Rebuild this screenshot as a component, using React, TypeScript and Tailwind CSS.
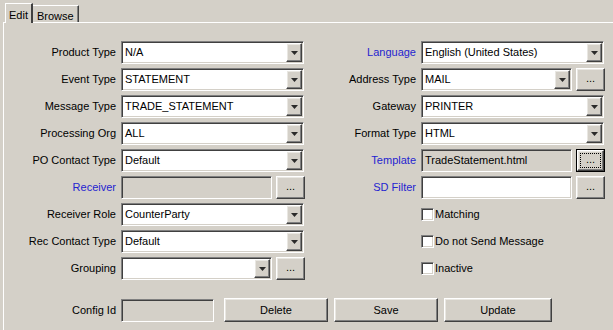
import React from 'react';

const raised =
  'border border-t-white border-l-white border-r-[#404040] border-b-[#404040] shadow-[inset_-1px_-1px_0_#808080,inset_1px_1px_0_#e9e7e2]';
const sunken =
  'border border-t-[#808080] border-l-[#808080] border-r-white border-b-white shadow-[inset_1px_1px_0_#404040,inset_-1px_-1px_0_#d4d0c8]';

function Arrow() {
  return (
    <div className={`${raised} w-[16px] h-full flex items-center justify-center bg-[#d4d0c8]`}>
      <svg width="7" height="4" viewBox="0 0 7 4">
        <polygon points="0,0 7,0 3.5,4" fill="#2a2a2a" />
      </svg>
    </div>
  );
}

function Combo({ value, w = 'w-[183px]' }: { value: string; w?: string }) {
  return (
    <div className={`${sunken} ${w} h-[23px] bg-white flex p-[1px]`}>
      <span className="flex-1 pl-[2px] leading-[19px] truncate">{value}</span>
      <Arrow />
    </div>
  );
}

function Field({ value = '', w, bg = 'bg-[#d4d0c8]' }: { value?: string; w: string; bg?: string }) {
  return (
    <div className={`${sunken} ${w} h-[23px] ${bg} flex items-center pl-[3px]`}>
      <span>{value}</span>
    </div>
  );
}

function Dots({ focused = false }: { focused?: boolean }) {
  if (focused) {
    return (
      <div className="w-[29px] h-[23px] border border-black">
        <div className={`${raised} w-full h-full flex items-center justify-center p-[2px]`}>
          <div className="w-full h-full border border-dotted border-black flex items-center justify-center leading-none pb-[2px]">
            ...
          </div>
        </div>
      </div>
    );
  }
  return (
    <div className={`${raised} w-[29px] h-[23px] flex items-center justify-center leading-none pb-[2px]`}>
      ...
    </div>
  );
}

function Row({
  label,
  blue = false,
  labelW,
  children,
}: {
  label: string;
  blue?: boolean;
  labelW: string;
  children: React.ReactNode;
}) {
  return (
    <div className="flex items-center h-[23px]">
      <div className={`${labelW} text-right ${blue ? 'text-[#2424d0]' : 'text-black'}`}>{label}</div>
      <div className="flex items-center gap-[4px] ml-[5px]">{children}</div>
    </div>
  );
}

function Check({ label }: { label: string }) {
  return (
    <div className="flex items-center h-[23px]">
      <div className={`${sunken} w-[13px] h-[13px] bg-white`} />
      <span className="ml-[1px]">{label}</span>
    </div>
  );
}

function Btn({ label, w }: { label: string; w: string }) {
  return (
    <div className={`${raised} ${w} h-[24px] flex items-center justify-center`}>{label}</div>
  );
}

export default function App() {
  const L = 'w-[112px]';
  const R = 'w-[111px]';
  return (
    <div className="w-[613px] h-[330px] bg-[#d4d0c8] overflow-hidden text-[11px] text-black font-['Liberation_Sans',Arial,sans-serif]">
      <div className="flex items-end h-[22px] pl-[5px]">
        <div className="relative z-10 h-[20px] mb-[-1px] px-[3px] pt-[3px] bg-[#d4d0c8] border-t border-l border-white border-r-2 border-r-[#404040]">
          Edit
        </div>
        <div className="h-[17px] px-[4px] pt-[2px] border-t border-white border-r border-r-[#404040] shadow-[inset_-1px_0_0_#808080]">
          Browse
        </div>
      </div>
      <div className="ml-[3px] border-t border-l border-white h-[308px] pt-[18px]">
        <div className="flex">
          <div className="w-[301px] flex flex-col gap-[4px]">
            <Row label="Product Type" labelW={L}>
              <Combo value="N/A" />
            </Row>
            <Row label="Event Type" labelW={L}>
              <Combo value="STATEMENT" />
            </Row>
            <Row label="Message Type" labelW={L}>
              <Combo value="TRADE_STATEMENT" />
            </Row>
            <Row label="Processing Org" labelW={L}>
              <Combo value="ALL" />
            </Row>
            <Row label="PO Contact Type" labelW={L}>
              <Combo value="Default" />
            </Row>
            <Row label="Receiver" blue labelW={L}>
              <Field w="w-[151px]" />
              <Dots />
            </Row>
            <Row label="Receiver Role" labelW={L}>
              <Combo value="CounterParty" />
            </Row>
            <Row label="Rec Contact Type" labelW={L}>
              <Combo value="Default" />
            </Row>
            <Row label="Grouping" labelW={L}>
              <Combo value="" w="w-[151px]" />
              <Dots />
            </Row>
          </div>
          <div className="flex flex-col gap-[4px]">
            <Row label="Language" blue labelW={R}>
              <Combo value="English (United States)" />
            </Row>
            <Row label="Address Type" labelW={R}>
              <Combo value="MAIL" w="w-[151px]" />
              <Dots />
            </Row>
            <Row label="Gateway" labelW={R}>
              <Combo value="PRINTER" />
            </Row>
            <Row label="Format Type" labelW={R}>
              <Combo value="HTML" />
            </Row>
            <Row label="Template" blue labelW={R}>
              <Field w="w-[151px]" value="TradeStatement.html" />
              <Dots focused />
            </Row>
            <Row label="SD Filter" blue labelW={R}>
              <Field w="w-[151px]" bg="bg-white" />
              <Dots />
            </Row>
            <div className="flex flex-col gap-[4px] ml-[116px]">
              <Check label="Matching" />
              <Check label="Do not Send Message" />
              <Check label="Inactive" />
            </div>
          </div>
        </div>
        <div className="flex items-center mt-[18px] h-[24px]">
          <div className={`${L} text-right`}>Config Id</div>
          <div className="ml-[5px]">
            <Field w="w-[93px]" />
          </div>
          <div className="ml-[10px] flex gap-[6px]">
            <Btn label="Delete" w="w-[104px]" />
            <Btn label="Save" w="w-[104px]" />
            <Btn label="Update" w="w-[108px]" />
          </div>
        </div>
      </div>
    </div>
  );
}
